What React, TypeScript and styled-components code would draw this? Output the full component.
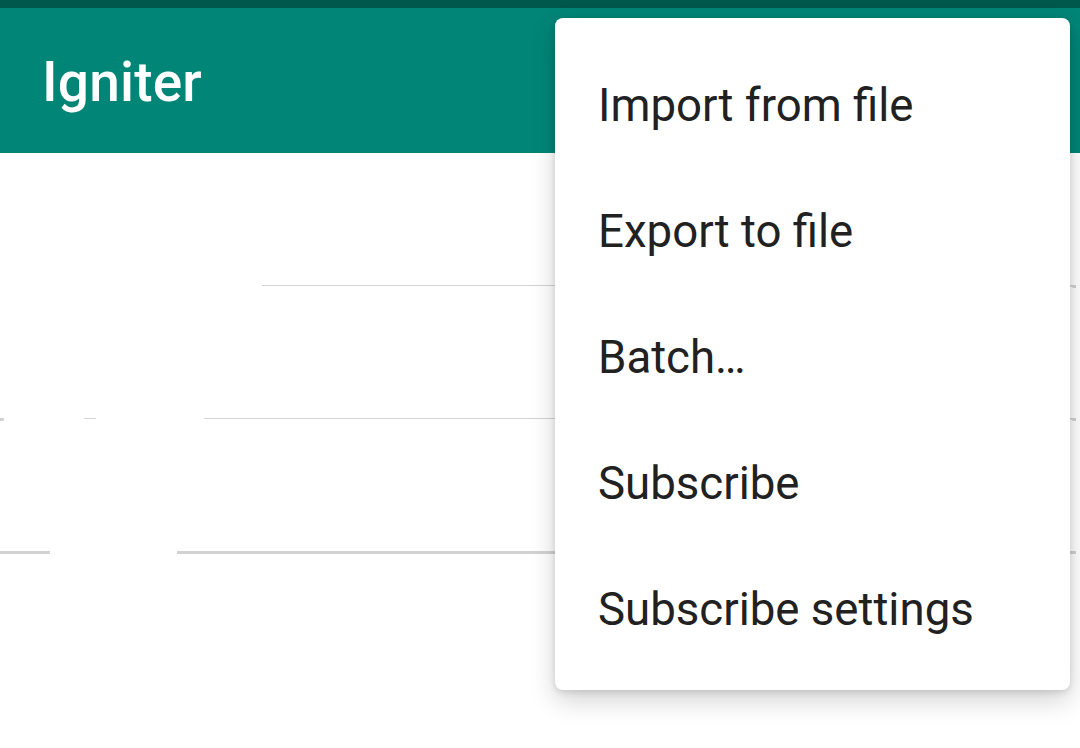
import React from 'react'
import styled, { createGlobalStyle } from 'styled-components'

const GlobalStyle = createGlobalStyle`
  html, body {
    margin: 0;
    padding: 0;
    background: #ffffff;
    font-family: Roboto, "Noto Sans", sans-serif;
  }
`

const Screen = styled.div`
  position: relative;
  width: 1080px;
  height: 748px;
  overflow: hidden;
  background: #ffffff;
`

const StatusBar = styled.div`
  height: 8px;
  background: #00574b;
`

const Toolbar = styled.header`
  display: flex;
  align-items: center;
  height: 145px;
  padding-left: 42px;
  padding-top: 3px;
  box-sizing: border-box;
  background: #008577;
`

const Title = styled.h1`
  margin: 0;
  color: #ffffff;
  font-size: 55px;
  font-weight: 500;
  letter-spacing: 0.2px;
`

const CardList = styled.div`
  display: flex;
  flex-direction: column;
  padding-right: 4px;
`

const Card = styled.div`
  position: relative;
  height: 133px;
  background: #ffffff;
  border-radius: 8px;
`

// bottom shadow edge; gaps are [from, to] pixel ranges left blank
const CardEdge = styled.div<{ $gaps: [number, number][] }>`
  position: absolute;
  left: 0;
  right: 0;
  bottom: -2px;
  height: 3px;
  background: ${({ $gaps }) => {
    const stops: string[] = []
    let at = 0
    $gaps.forEach(([a, b]) => {
      stops.push(`#d2d2d2 ${at}px`, `#d2d2d2 ${a}px`, `transparent ${a}px`, `transparent ${b}px`)
      at = b
    })
    stops.push(`#d2d2d2 ${at}px`, '#d2d2d2 100%')
    return `linear-gradient(90deg, ${stops.join(', ')})`
  }};
  filter: blur(0.6px);
`

const Menu = styled.ul`
  position: absolute;
  top: 18px;
  left: 555px;
  width: 515px;
  margin: 0;
  padding: 24px 0 18px;
  list-style: none;
  background: #ffffff;
  border-radius: 8px;
  box-shadow: 0 10px 26px rgba(0, 0, 0, 0.18), 0 2px 6px rgba(0, 0, 0, 0.12);
`

const MenuItem = styled.li`
  display: flex;
  align-items: center;
  height: 126px;
  padding-left: 43px;
  color: #212121;
  font-size: 45.6px;
  font-weight: 400;
`

const items = ['Import from file', 'Export to file', 'Batch…', 'Subscribe', 'Subscribe settings']

const edges: [number, number][][] = [
  [[0, 262]],
  [[4, 84], [96, 204]],
  [[50, 177]],
]

export default function App() {
  return (
    <Screen>
      <GlobalStyle />
      <StatusBar />
      <Toolbar>
        <Title>Igniter</Title>
      </Toolbar>
      <CardList>
        {edges.map((gaps, i) => (
          <Card key={i}>
            <CardEdge $gaps={gaps} />
          </Card>
        ))}
      </CardList>
      <Menu>
        {items.map((label) => (
          <MenuItem key={label}>{label}</MenuItem>
        ))}
      </Menu>
    </Screen>
  )
}
